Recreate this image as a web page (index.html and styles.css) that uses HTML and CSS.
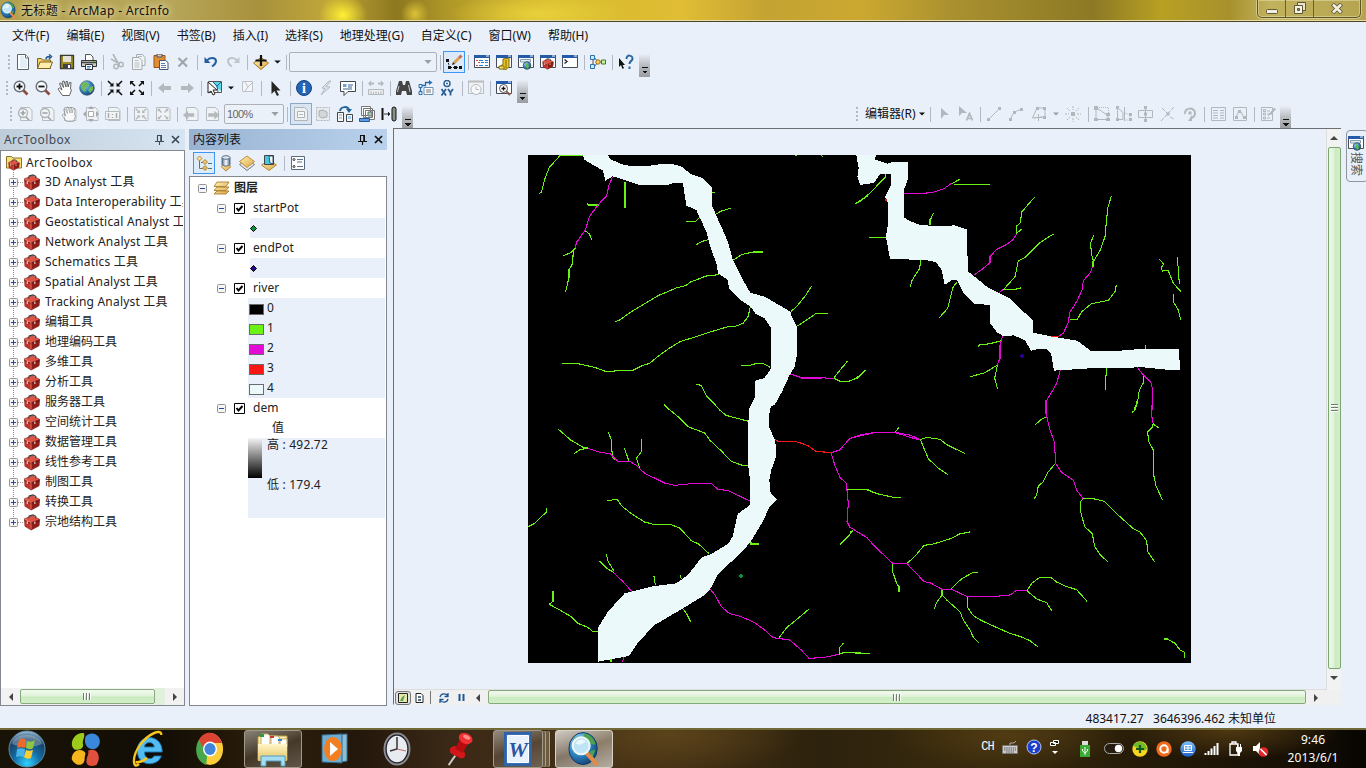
FILE: index.html
```html
<!DOCTYPE html>
<html lang="zh-CN">
<head>
<meta charset="utf-8">
<title>无标题 - ArcMap - ArcInfo</title>
<link rel="stylesheet" href="styles.css">
</head>
<body>
<svg class="defs" width="0" height="0">
<defs>
<linearGradient id="gGold" x1="0" y1="0" x2="1" y2="1"><stop offset="0" stop-color="#fff0b8"/><stop offset="1" stop-color="#dba642"/></linearGradient>
<linearGradient id="gCyl"><stop offset="0" stop-color="#49698f"/><stop offset=".5" stop-color="#fff"/><stop offset="1" stop-color="#46678c"/></linearGradient>
<radialGradient id="gOrb" cx=".5" cy=".9" r=".9"><stop offset="0" stop-color="#2fd3ff"/><stop offset=".4" stop-color="#146fa8"/><stop offset=".75" stop-color="#174267"/><stop offset="1" stop-color="#9fc3da"/></radialGradient>
<radialGradient id="gGlobe" cx=".35" cy=".3" r=".8"><stop offset="0" stop-color="#b9e4ff"/><stop offset=".5" stop-color="#2f86c4"/><stop offset="1" stop-color="#0e3767"/></radialGradient>
<linearGradient id="gBlue" x1="0" y1="0" x2="0" y2="1"><stop offset="0" stop-color="#7fc4ff"/><stop offset="1" stop-color="#1b5fc8"/></linearGradient>
<linearGradient id="gFold" x1="0" y1="0" x2="0" y2="1"><stop offset="0" stop-color="#fff6c9"/><stop offset="1" stop-color="#e3c25f"/></linearGradient>

<symbol id="new" viewBox="0 0 16 16"><path d="M2.500.5h8l3 3v12h-11z" fill="#fff" stroke="#5f6468"/><path d="M5 2v12h7V5H9V2z" fill="#e3edf8"/><path d="M10.500.5v3.500h3" fill="#fff" stroke="#5f6468"/></symbol>
<symbol id="open" viewBox="0 0 16 16"><path d="M.5 14.500v-10h4l1 1.500h8v8.500z" fill="#f3d167" stroke="#7b6320"/><path d="M.5 14.500L3 8h12.500l-2.500 6.500z" fill="#ffedab" stroke="#7b6320"/><path d="M9 5c0-2 2-2.500 4-2.500M12 .5l2.500 2-2.500 2.500" fill="none" stroke="#1b578f" stroke-width="1.500"/></symbol>
<symbol id="save" viewBox="0 0 16 16"><path d="M1.500 1.500h13v13h-13z" fill="#9b8a22" stroke="#3b3b32" stroke-width="1.300"/><path d="M4 2h8v6H4z" fill="#e5e3d8"/><path d="M4 10h8v5H4z" fill="#414141"/><path d="M9 11h2v3H9z" fill="#fff"/></symbol>
<symbol id="print" viewBox="0 0 16 16"><path d="M4.500 7V.5h5L12 3v4z" fill="#fff" stroke="#555"/><path d="M.5 6.500h15v6H.5z" fill="#c9c9c9" stroke="#333"/><path d="M1 8.500h14" stroke="#444" stroke-width="1.500"/><path d="M4.500 10.500h7v5h-7z" fill="#fff" stroke="#333"/><path d="M6 12.500h4M6 14h3" stroke="#287fd0"/><path d="M12 7.500h2" stroke="#67bd20"/></symbol>
<symbol id="cut" viewBox="0 0 16 16"><path d="M4 0l5 9M2 5l9 5" stroke="#b2b7bb" stroke-width="1.700" fill="none"/><circle cx="7" cy="12.500" r="2.200" fill="none" stroke="#b2b7bb" stroke-width="1.500"/><circle cx="12" cy="10.500" r="2.200" fill="none" stroke="#b2b7bb" stroke-width="1.500"/></symbol>
<symbol id="copy" viewBox="0 0 16 16"><path d="M5.500.5h6l2.500 3v8H5.500z" fill="#f2f5f8" stroke="#a5aaae"/><path d="M1.500 3.500H8l3 3v9H1.500z" fill="#f2f5f8" stroke="#a5aaae"/><path d="M3.500 6.500h4M3.500 9h5M3.500 11h5M3.500 13h5M7 2.500h4" stroke="#b7bcc0"/></symbol>
<symbol id="paste" viewBox="0 0 16 16"><path d="M1 1.500h11v12H1z" fill="#e18e34" stroke="#9b5314"/><path d="M4 0h5v3H4z" fill="#ccc" stroke="#555"/><path d="M6.500 6.500h6l2.500 2v7H6.500z" fill="#fff" stroke="#43566d"/><path d="M8 9.500h4M8 11.500h5M8 13.500h5" stroke="#5681b3"/></symbol>
<symbol id="del" viewBox="0 0 16 16"><path d="M3.500 4l8.500 8.500M12 4l-8.500 8.500" stroke="#a1a6aa" stroke-width="2.200"/></symbol>
<symbol id="undo" viewBox="0 0 16 16"><path d="M4 6.500c3-4 9-3 9 .5 0 3-2 4-4 5.500" fill="none" stroke="#245e9e" stroke-width="2"/><path d="M1.500 3v6h6z" fill="#245e9e"/></symbol>
<symbol id="redo" viewBox="0 0 16 16"><path d="M12 6.500C9 2.500 3 3.500 3 7c0 3 2 4 4 5.500" fill="none" stroke="#bfc5ca" stroke-width="2"/><path d="M14.500 3v6h-6z" fill="#bfc5ca"/></symbol>
<symbol id="add" viewBox="0 0 16 16"><path d="M8 3.500l7.500 5.500L8 15.500.5 9z" fill="url(#gGold)" stroke="#a97524"/><path d="M8 1v11M2.500 6.500h11" stroke="#111" stroke-width="2.200"/></symbol>
<symbol id="sketch" viewBox="0 0 16 16"><path d="M1.500 6l2 7M4 13.500h11" fill="none" stroke="#222" stroke-dasharray="2 1"/><path d="M0 5h3v3H0zM2 12h3v3H2zM8 12h3v3H8zM13 12h3v3h-3z" fill="#111"/><path d="M8 9l5-5" stroke="#dda44e" stroke-width="3"/><path d="M13 4l2.500-2.500" stroke="#c96e52" stroke-width="3"/><path d="M6 11l1-3 2 2z" fill="#222"/></symbol>
<symbol id="wnd" viewBox="0 0 16 16"><path d="M.5 1.500h15v12H.5z" fill="#fff" stroke="#454c58"/><path d="M0 1h16v3H0z" fill="#235ba8"/><path d="M12 2h3" stroke="#fff"/></symbol>
<symbol id="toc" viewBox="0 0 16 16"><use href="#wnd"/><path d="M2 6.500h2M4 8.500h2M2 11.500h2" stroke="#de493e"/><path d="M5 6.500h4M7 8.500h3M5 11.500h4M11 6.500h3M11 8.500h3M11 11.500h3" stroke="#267fd0"/></symbol>
<symbol id="cat" viewBox="0 0 16 16"><use href="#wnd"/><path d="M7 5l6-1v9l-3 2.500-5-1v-3l2-1z" fill="#e5c523" stroke="#836b11"/><path d="M10 6v8M3 12h5v3H3z" fill="#f4df65" stroke="#836b11"/></symbol>
<symbol id="search" viewBox="0 0 16 16"><use href="#wnd"/><path d="M2.500 5.500h10v2.500h-10z" fill="#e2edf7" stroke="#879cad"/><circle cx="9" cy="11.500" r="3.800" fill="url(#gGlobe)" stroke="#45606c"/><path d="M7 9l3 1 1 3-2 2-1-3z" fill="#61ba49"/></symbol>
<symbol id="tb" viewBox="0 0 18 18"><path d="M1 5l8-3 8 3.500-.5 7L8 17 1.500 13z" fill="#c23329" stroke="#7a1b16" stroke-width=".6"/><path d="M1 5l8-3 8 3.500L8 9z" fill="#dc5547"/><path d="M8 9l9-3.500-.5 7L8 17z" fill="#8e1e19"/><path d="M1 7l7 3.500L17 7" fill="none" stroke="#5c1410" stroke-width=".7"/><path d="M1.500 5.500L8 9v7" fill="none" stroke="#e98a78" stroke-width=".8"/><path d="M5.500 4.500L6 2l4-1 3 1.500v2" fill="none" stroke="#3a3a3a" stroke-width="1.200"/><path d="M4 7.500v3M12 8v2.500" stroke="#eadfd4" stroke-width="1.100"/></symbol>
<symbol id="tbw" viewBox="0 0 16 16"><use href="#wnd"/><use href="#tb" x="1" y="4" width="14" height="12"/></symbol>
<symbol id="py" viewBox="0 0 16 16"><use href="#wnd"/><path d="M2.500 5.500L5 7.500l-2.500 2" fill="none" stroke="#222" stroke-width="1.300"/></symbol>
<symbol id="model" viewBox="0 0 16 16"><path d="M3 3v10M4 3l4 5h5M4 13l4-5" fill="none" stroke="#555"/><path d="M.5 1.500h4v4h-4zM.5 10.500h4v4h-4z" fill="#c5ecff" stroke="#2c70b0"/><circle cx="8" cy="8" r="2.200" fill="#ffd15d" stroke="#9c7020"/><path d="M11.500 6h4v4h-4z" fill="#c6f0a5" stroke="#427a21"/></symbol>
<symbol id="help" viewBox="0 0 16 16"><path d="M1 4v9l2-2 1.500 4 1.500-1-1.500-3H7z" fill="#111"/><path d="M8.500 5c0-5 6.500-4 6 0-.3 2-3 2-3 5" fill="none" stroke="#2a69a3" stroke-width="2"/><path d="M10.500 12.500h2V15h-2z" fill="#2a69a3"/></symbol>

<symbol id="mag" viewBox="0 0 16 16"><path d="M9.500 9.500l5 5" stroke="#8e4b3b" stroke-width="2.600"/><circle cx="6.500" cy="6.500" r="5.300" fill="#f8fcff" stroke="#676d73" stroke-width="1.400"/></symbol>
<symbol id="zin" viewBox="0 0 16 16"><use href="#mag"/><path d="M3.500 6.500h6M6.500 3.500v6" stroke="#111" stroke-width="1.800"/></symbol>
<symbol id="zout" viewBox="0 0 16 16"><use href="#mag"/><path d="M3.500 6.500h6" stroke="#111" stroke-width="1.800"/></symbol>
<symbol id="hand" viewBox="0 0 16 16"><path d="M5.500 15.500L1 9l1.500-1L5 10 2.500 3.500 4 3l2.500 4.500-1-6L7 1l2 6V1.500h1.500L11 7l1.500-4.500H14L13.500 9l1 1-2 5.500z" fill="#fff" stroke="#555" stroke-width=".9"/></symbol>
<symbol id="globe" viewBox="0 0 16 16"><circle cx="8" cy="8" r="7.300" fill="url(#gGlobe)" stroke="#4a5f73" stroke-width=".7"/><path d="M3 3l4-1 3 2-1 3-3 1 1 3-2 1-3-4zM11 7l3-1v4l-3 3-2-3z" fill="#72b85a"/></symbol>
<symbol id="fixin" viewBox="0 0 16 16"><path d="M1 1l4 4M15 1l-4 4M1 15l4-4M15 15l-4-4" stroke="currentColor" stroke-width="1.600"/><path d="M6.500 2.500v4h-4zM9.500 2.500v4h4zM6.500 13.500v-4h-4zM9.500 13.500v-4h4z" fill="currentColor"/></symbol>
<symbol id="fixout" viewBox="0 0 16 16"><path d="M2 2l4 4M14 2l-4 4M2 14l4-4M14 14l-4-4" stroke="currentColor" stroke-width="1.600"/><path d="M1 5V1h4zM15 5V1h-4zM1 11v4h4zM15 11v4h-4z" fill="currentColor"/></symbol>
<symbol id="back" viewBox="0 0 16 16"><path d="M1 8l6-5v3h7v4H7v3z" fill="#b4b9bd"/></symbol>
<symbol id="fwd" viewBox="0 0 16 16"><path d="M15 8L9 3v3H2v4h7v3z" fill="#b4b9bd"/></symbol>
<symbol id="selfeat" viewBox="0 0 16 16"><path d="M1.500 1.500h13v11h-13z" fill="#f5f8fa" stroke="#555"/><path d="M6 2h8v9l-4-3z" fill="#59d5ef"/><path d="M6 2l4 4 4-4M10 6l1 6" fill="none" stroke="#23637a"/><path d="M1 2v11l3-2 2 4 2-1-2-4h4z" fill="#fff" stroke="#222"/></symbol>
<symbol id="clearsel" viewBox="0 0 16 16"><path d="M3.500 1.500h10v10h-10zM6 2l3 5-3 4M9 7l4-4" fill="#f3f5f8" stroke="#bdc2c7"/></symbol>
<symbol id="arrow" viewBox="0 0 16 16"><path d="M4 1v13l3-3 2.500 5 2-1-2.500-4.500h4z" fill="#252525"/></symbol>
<symbol id="info" viewBox="0 0 16 16"><circle cx="8" cy="8" r="7.500" fill="#2464b8" stroke="#17417e"/><text x="8" y="13" text-anchor="middle" font-family="Liberation Serif,serif" font-weight="bold" font-size="14" fill="#fff">i</text></symbol>
<symbol id="bolt" viewBox="0 0 16 16"><path d="M11 1L4 8l3 .5L3 15l9-8-4-.5L13 1z" fill="#dfe3e7" stroke="#b4b9be"/></symbol>
<symbol id="popup" viewBox="0 0 16 16"><path d="M.5 1.500h15v10H8l-4 4v-4H.5z" fill="#fff" stroke="#41474e"/><path d="M3 4h3.500v3H3z" fill="#6aa3d9"/><path d="M8 5h5M8 7h4M3 9h9" stroke="#3c638d"/></symbol>
<symbol id="measure" viewBox="0 0 16 16"><path d="M0 3.500l3-3v2h3v2H3v2zM16 3.500l-3-3v2h-3v2h3v2z" fill="#b3b8bc"/><path d="M.5 9.500h15v5H.5z" fill="#edf0f2" stroke="#b3b8bc"/><path d="M3 11v3M5.500 12v2M8 11v3M10.500 12v2M13 11v3" stroke="#b3b8bc"/></symbol>
<symbol id="bino" viewBox="0 0 16 16"><path d="M3 1h3l1 4h2l1-4h3l3 10v4h-5l-1-4H6l-1 4H0v-4z" fill="#454545"/><path d="M3 6l-1.500 6M12.500 5l1.500 7" stroke="#ccc"/></symbol>
<symbol id="route" viewBox="0 0 16 16"><path d="M2.500 13V5.500h5V2.500h4" fill="none" stroke="#286ba7" stroke-width="1.300"/><path d="M11 0l3.500 2.500L11 5z" fill="#286ba7"/><path d="M1 4.500h3v3H1zM1 11.500h3v3H1z" fill="#dff2ff" stroke="#286ba7"/><path d="M6 7.500h9v7H6z" fill="#fff" stroke="#6a91b5"/><path d="M8 10h5M8 12h5" stroke="#777"/></symbol>
<symbol id="xy" viewBox="0 0 16 16"><circle cx="7" cy="3.500" r="3" fill="#fff" stroke="#2a6095" stroke-width="1.500"/><circle cx="7" cy="3.500" r="1" fill="#2a6095"/><path d="M1.500 9l4.500 6.500M6 9l-4.500 6.500M8 9l2.500 3.500L13 9M10.500 12v3.500" fill="none" stroke="#2a6095" stroke-width="1.800"/></symbol>
<symbol id="time" viewBox="0 0 16 16"><path d="M.5 1.500h15v12H.5z" fill="#edf0f3" stroke="#bbc0c4"/><path d="M0 1.500h16" stroke="#bbb" stroke-width="2"/><circle cx="8" cy="9.500" r="5" fill="#f6f8f9" stroke="#b6bbbf"/><path d="M8 6.500v3h3" fill="none" stroke="#b6bbbf"/></symbol>
<symbol id="viewer" viewBox="0 0 16 16"><use href="#wnd"/><path d="M10 11l4 4" stroke="#99563e" stroke-width="2"/><circle cx="7.500" cy="8.500" r="4" fill="#fff" stroke="#555"/><path d="M5.500 8.500h4M7.500 6.500v4" stroke="#111" stroke-width="1.300"/></symbol>

<symbol id="pg" viewBox="0 0 16 16"><path d="M3.500 1.500h9l2.500 3v10H3.500z" fill="#f0f3f6" stroke="#b7bcc0"/></symbol>
<symbol id="pzin" viewBox="0 0 16 16"><use href="#pg"/><circle cx="6" cy="7" r="4.500" fill="#f1f3f5" stroke="#aeb3b7" stroke-width="1.300"/><path d="M3.500 7h5M6 4.500v5M9 11l3 3" stroke="#9da2a6" stroke-width="1.600"/></symbol>
<symbol id="pzout" viewBox="0 0 16 16"><use href="#pg"/><circle cx="6" cy="7" r="4.500" fill="#f1f3f5" stroke="#aeb3b7" stroke-width="1.300"/><path d="M3.500 7h5M9 11l3 3" stroke="#9da2a6" stroke-width="1.600"/></symbol>
<symbol id="phand" viewBox="0 0 16 16"><use href="#pg"/><g opacity=".45"><use href="#hand"/></g></symbol>
<symbol id="pfull" viewBox="0 0 16 16"><use href="#pg"/><path d="M8 0l3 3H5zM8 16l3-3H5zM0 8l3-3v6zM16 8l-3-3v6z" fill="#a5aaae"/><path d="M5.500 5.500h5v5h-5z" fill="#fff" stroke="#aaa"/></symbol>
<symbol id="p11" viewBox="0 0 16 16"><use href="#pg"/><path d="M.5 5.500h14v8H.5z" fill="#f2f4f6" stroke="#b7bcc0"/><path d="M3.500 7v5M11.500 7v5M7.500 8v1M7.500 11v1" stroke="#aaa" stroke-width="1.500"/></symbol>
<symbol id="pin1" viewBox="0 0 16 16"><path d="M1.500 1.500h12l1.500 2v11H1.500z" fill="#f0f3f6" stroke="#b7bcc0"/><use href="#fixin" x="2" y="2" width="12" height="12"/></symbol>
<symbol id="pout1" viewBox="0 0 16 16"><path d="M1.500 1.500h12l1.500 2v11H1.500z" fill="#f0f3f6" stroke="#b7bcc0"/><use href="#fixout" x="2" y="2" width="12" height="12"/></symbol>
<symbol id="pback" viewBox="0 0 16 16"><use href="#pg"/><use href="#back" y="2" x="-1" width="14" height="14"/></symbol>
<symbol id="pfwd" viewBox="0 0 16 16"><path d="M1.500 1.500h9l3 3v10h-12z" fill="#f0f3f6" stroke="#b7bcc0"/><use href="#fwd" y="2" x="1" width="15" height="14"/></symbol>
<symbol id="draft" viewBox="0 0 16 16"><path d="M1.500 1.500h10l3 3v10h-13z" fill="#edf0f3" stroke="#b0b5ba"/><path d="M4.500 5.500h7v6h-7zM6 8.500h4" fill="#f8f9fa" stroke="#adb2b7"/></symbol>
<symbol id="focus" viewBox="0 0 16 16"><path d="M1.500 1.500h13v13h-13z" fill="#e8ebee" stroke="#b3b8bd" stroke-dasharray="2 1"/><path d="M4 5l4-1 4 2v5l-5 1-3-2z" fill="#d3d7da" stroke="#a9aeb3"/></symbol>
<symbol id="layout" viewBox="0 0 16 16"><path d="M3 5c1-5 8-5 9-1" fill="none" stroke="#21649e" stroke-width="2"/><path d="M9 3h6l-3 4z" fill="#21649e"/><path d="M.5 6.500h6v9h-6zM9.500 8.500h6v7h-6z" fill="#f4f6f7" stroke="#444"/><path d="M2 9h3M2 12h3" stroke="#999"/><path d="M11 10h3v3h-3z" fill="#9cd1ed"/></symbol>
<symbol id="pages" viewBox="0 0 16 16"><path d="M2.500.5h9v9h-9zM4.500 2.500h9v9h-9zM6.500 4.500h9v9h-9z" fill="#fff" stroke="#777"/><path d="M9 6h4v4H9z" fill="#9dd494" stroke="#668"/><path d="M.5 12.500h10v3H.5z" fill="#5e9ce0" stroke="#235c9d"/></symbol>
<symbol id="swipe" viewBox="0 0 16 16"><path d="M1.500 2v12" stroke="#111" stroke-width="2"/><path d="M3 8h5M7 6l2 2-2 2" stroke="#333"/><rect x="11" y="1" width="4" height="14" rx="2" fill="#8b9087" stroke="#111"/></symbol>

<symbol id="g-arrow" viewBox="0 0 16 16"><path d="M5 2v11l3-4h5z"/></symbol>
<symbol id="g-arrowA" viewBox="0 0 16 16"><path d="M1 0v10l3-3h5z"/><path d="M8.500 14.500l3-7 3 7M10 12.500h3" fill="none" stroke="currentColor" stroke-width="1.700"/></symbol>
<symbol id="g-line" viewBox="0 0 16 16"><path d="M3 13L13 3" stroke="currentColor"/><path d="M1 12h3v3H1zM12 1h3v3h-3z"/></symbol>
<symbol id="g-arc" viewBox="0 0 16 16"><path d="M3 14c0-6 5-10 10-10" fill="none" stroke="currentColor"/><path d="M1 12h3v3H1zM5 5h3v3H5zM12 2h3v3h-3z"/></symbol>
<symbol id="g-trace" viewBox="0 0 16 16"><path d="M6 2h8v9H9M6 2L1.500 12H5" fill="none" stroke="currentColor"/><path d="M5 1h3v3H5zM12 1h3v3h-3zM12 10h3v3h-3zM7 8h1v3h3v1H8v3H7v-3H4v-1h3z"/></symbol>
<symbol id="g-point" viewBox="0 0 16 16"><path d="M8 0v4M8 12v4M0 8h4M12 8h4M2 2l3 3M14 2l-3 3M2 14l3-3M14 14l-3-3" stroke="currentColor" stroke-dasharray="2 1"/><path d="M6 6h4v4H6z"/></symbol>
<symbol id="g-edit" viewBox="0 0 16 16"><path d="M2 2v11.500h12V9.500L2 1.500" fill="none" stroke="currentColor"/><path d="M3 1.500h11.500V8" fill="none" stroke="currentColor" stroke-dasharray="1 1"/><path d="M0 0h4v4H0zM0 12h4v3H0zM12 12h4v3h-4zM12 7h4v3h-4z"/></symbol>
<symbol id="g-reshape" viewBox="0 0 16 16"><path d="M1.500 2v11.500H7V6.500L2 2M8.500 1v14" fill="none" stroke="currentColor"/><path d="M9 7l5 2v5H9" fill="none" stroke="currentColor" stroke-dasharray="1 1"/><path d="M0 0h3v3H0zM0 12h3v3H0zM13 7h3v3h-3zM13 12h3v3h-3z"/></symbol>
<symbol id="g-cut" viewBox="0 0 16 16"><path d="M.5 4.500h14v7H.5zM7.500 0v16" fill="none" stroke="currentColor"/><path d="M6 0h3v3H6zM6 6.500h3v3H6zM6 13h3v3H6z"/></symbol>
<symbol id="g-split" viewBox="0 0 16 16"><path d="M1 15L14 1M2 2l5 5M10 11l4 2" fill="none" stroke="currentColor" stroke-dasharray="4 1"/><path d="M6.500 6.500h3v3h-3z"/></symbol>
<symbol id="g-rot" viewBox="0 0 16 16"><path d="M3 8c-1-7 10-7 10-1 0 4-4 5-4 5" fill="none" stroke="currentColor" stroke-width="2"/><path d="M10 9v6H6zM6.500 5.500h3v3h-3z"/></symbol>
<symbol id="g-table" viewBox="0 0 16 16"><path d="M1.500 1.500h14v13h-14zM3 4.500h5M3 7h5M3 9.500h5M3 12h5M10 4.500h4M10 7h4M10 9.500h4M10 12h4" fill="none" stroke="currentColor"/></symbol>
<symbol id="g-sk" viewBox="0 0 16 16"><path d="M1.500 1.500h13v13h-13zM4 11l3-6 2 1 3 6" fill="none" stroke="currentColor"/><path d="M3 10h3v3H3zM6 4h3v3H6zM11 10h3v3h-3z"/></symbol>
<symbol id="g-create" viewBox="0 0 16 16"><path d="M1.500 1.500h11v13h-11zM3.500 3.500h2v2h-2zM3.500 7h2v2h-2zM3.500 11h2v2h-2zM7 5h3M7 8h3M7 12h3M8 10l7-8" fill="none" stroke="currentColor"/><path d="M9 8l5-6 2 1-5 6z"/></symbol>

<symbol id="listorder" viewBox="0 0 17 17"><path d="M3.500 5v8.500H7M5 7.500h2M12 8.500h4M12 13.500h4" fill="none" stroke="#577"/><path d="M3.500 1L6 3.500 3.500 6 1 3.500zM9 4.500l2.500 2.500L9 9.500 6.500 7zM9 10.500l2.500 2.500L9 15.500 6.500 13z" fill="url(#gGold)" stroke="#b68836"/></symbol>
<symbol id="cyl" viewBox="0 0 16 18"><path d="M8 9l5 3.500-5 4.500-5-4.500z" fill="url(#gGold)" stroke="#b68836"/><path d="M4 3.500v7c1 2 7 2 8 0v-7z" fill="url(#gCyl)" stroke="#5b6d85"/><ellipse cx="8" cy="3.500" rx="4" ry="1.800" fill="#dfe9f2" stroke="#5b6d85"/></symbol>
<symbol id="vis" viewBox="0 0 18 18"><path d="M1.500 10.500l7.500-5 7.500 5-7.500 6z" fill="#e5e7ea" stroke="#777"/><path d="M1.500 7.500L9 2l7.500 5.500-7.500 6z" fill="url(#gGold)" stroke="#c18f3a"/></symbol>
<symbol id="selc" viewBox="0 0 18 18"><path d="M1.500 11L9 6l7.500 5L9 16.500z" fill="url(#gGold)" stroke="#b68836"/><path d="M4.500 1.500h9v9h-9z" fill="#44c9df" stroke="#444"/><path d="M9 2h4v8l-3-1z" fill="#e8fbff" stroke="#235" stroke-width=".8"/></symbol>
<symbol id="opts" viewBox="0 0 14 16"><path d="M.5 1.500h13v13H.5z" fill="#fff" stroke="#5b6c7d"/><path d="M6 4.500h6M6 11.500h6M6 7h5" stroke="#587594"/><circle cx="3" cy="4.500" r="1" fill="none" stroke="#333"/><circle cx="3" cy="11.500" r="1" fill="none" stroke="#333"/></symbol>
<symbol id="pushpin" viewBox="0 0 9 10"><path d="M2 .5h5M2.500 1v5M6 1v5M0 6.500h9M4.500 7v3" stroke="currentColor" stroke-width="1.100"/><path d="M5.500.5h1.500V6H5.500z" fill="currentColor"/></symbol>
<symbol id="close" viewBox="0 0 9 9"><path d="M1 1l7 7M8 1L1 8" stroke="currentColor" stroke-width="1.700"/></symbol>
<symbol id="box" viewBox="0 0 9 9"><rect x=".5" y=".5" width="8" height="8" rx="1" fill="#f5f5f5" stroke="#929292"/></symbol>
<symbol id="plus" viewBox="0 0 9 9"><use href="#box"/><path d="M2 4.500h5M4.500 2v5" stroke="#2b4796"/></symbol>
<symbol id="minus" viewBox="0 0 9 9"><use href="#box"/><path d="M2 4.500h5" stroke="#2b4796"/></symbol>
<symbol id="chk" viewBox="0 0 11 11"><path d="M.5.5h10v10H.5z" fill="#fff" stroke="#000"/><path d="M2.500 5l2 2.500L8.500 3" fill="none" stroke="#000" stroke-width="1.900"/></symbol>
<symbol id="layers" viewBox="0 0 17 14"><path d="M1 13l3-3h12l-3 3zM1 9.500l3-3.500h12l-3 3.500zM1 5.500L4 1h12l-3 4.500z" fill="url(#gGold)" stroke="#a9802f" stroke-width=".9"/></symbol>
<symbol id="rootbox" viewBox="0 0 16 16"><path d="M.5 1.500h5L7 3h8.500v10H.5z" fill="#f7df7a" stroke="#8a7426"/><use href="#tb" x="2" y="4" width="12" height="12"/></symbol>
<symbol id="al" viewBox="0 0 6 8"><path d="M5 0v8L1 4z" fill="#444"/></symbol>
<symbol id="ar" viewBox="0 0 6 8"><path d="M1 0v8l4-4z" fill="#444"/></symbol>

<symbol id="arcglobe" viewBox="0 0 36 40"><ellipse cx="17" cy="19" rx="15" ry="17" fill="url(#gGlobe)" stroke="#0d3a63"/><path d="M18 3c8 1 12 7 12 12l-6-1-6-5zM6 9l6-3-4 8zM24 22l6-2-3 9z" fill="#4da24f"/><path d="M21 24l10 11" stroke="#e18a4a" stroke-width="4.500" stroke-linecap="round"/><circle cx="15" cy="16" r="9" fill="#bfe4f5" stroke="#eef6fa" stroke-width="2.200"/><path d="M9 14c2-5 8-6 11-2l-6 3z" fill="#fff" opacity=".7"/></symbol>
</defs>
</svg>

<div class="screen">
<header class="title">
  <svg class="appicon" width="17" height="19"><use href="#arcglobe"/></svg>
  <span class="titletext">无标题 - ArcMap - ArcInfo</span>
  <div class="winbtns">
    <span><svg width="12" height="5"><rect x=".5" y=".5" width="11" height="4" rx="1" fill="#f1efe0" stroke="#5e5938"/></svg></span>
    <span><svg width="12" height="12"><path d="M3.500.5h8v8h-8z" fill="#e9e5cd" stroke="#5e5938"/><path d="M.5 3.500h8v8h-8z" fill="#f5f2e2" stroke="#5e5938"/><path d="M3.500 6.500h2v2h-2z" fill="#888150" stroke="#5e5938"/></svg></span>
    <span class="wide"><svg width="12" height="11"><path d="M1.500 1l9 9M10.500 1l-9 9" stroke="#5e5938" stroke-width="4.200"/><path d="M2 1.500l8 8M10 1.500l-8 8" stroke="#f1efe0" stroke-width="2.500"/></svg></span>
  </div>
</header>
<nav class="menu"><span>文件(F)</span><span>编辑(E)</span><span>视图(V)</span><span>书签(B)</span><span>插入(I)</span><span>选择(S)</span><span>地理处理(G)</span><span>自定义(C)</span><span>窗口(W)</span><span>帮助(H)</span></nav>

<div class="bar r1"><i class="grip"></i>
<svg><use href="#new"/></svg><svg><use href="#open"/></svg><svg><use href="#save"/></svg><svg><use href="#print"/></svg><i class="sep"></i>
<svg><use href="#cut"/></svg><svg><use href="#copy"/></svg><svg><use href="#paste"/></svg><svg><use href="#del"/></svg><i class="sep"></i>
<svg><use href="#undo"/></svg><svg><use href="#redo"/></svg><i class="sep"></i>
<svg><use href="#add"/></svg><i class="caret"></i><i class="sep"></i>
<div class="combo big"><i class="caret gray"></i></div><i class="sep"></i>
<svg class="on"><use href="#sketch"/></svg><i class="sep"></i>
<svg><use href="#toc"/></svg><svg><use href="#cat"/></svg><svg><use href="#search"/></svg><svg><use href="#tbw"/></svg><svg><use href="#py"/></svg><i class="sep"></i>
<svg><use href="#model"/></svg><i class="sep"></i><svg><use href="#help"/></svg><i class="more"></i></div>

<div class="bar r2"><i class="grip"></i>
<svg><use href="#zin"/></svg><svg><use href="#zout"/></svg><svg><use href="#hand"/></svg><svg><use href="#globe"/></svg><i class="sep"></i>
<svg><use href="#fixin"/></svg><svg><use href="#fixout"/></svg><i class="sep"></i>
<svg><use href="#back"/></svg><svg><use href="#fwd"/></svg><i class="sep"></i>
<svg><use href="#selfeat"/></svg><i class="caret"></i><svg><use href="#clearsel"/></svg><i class="sep"></i>
<svg class="w23"><use href="#arrow"/></svg><i class="sep"></i>
<svg><use href="#info"/></svg><svg><use href="#bolt"/></svg><svg><use href="#popup"/></svg><i class="sep"></i>
<svg><use href="#measure"/></svg><i class="sep"></i>
<svg><use href="#bino"/></svg><svg><use href="#route"/></svg><svg><use href="#xy"/></svg><i class="sep"></i>
<svg><use href="#time"/></svg><i class="sep"></i><svg><use href="#viewer"/></svg><i class="more"></i></div>

<div class="bar r3"><i class="grip"></i>
<svg><use href="#pzin"/></svg><svg><use href="#pzout"/></svg><svg><use href="#phand"/></svg><svg><use href="#pfull"/></svg><svg><use href="#p11"/></svg><i class="sep"></i>
<svg class="dim"><use href="#pin1"/></svg><svg class="dim"><use href="#pout1"/></svg><i class="sep"></i>
<svg><use href="#pback"/></svg><svg><use href="#pfwd"/></svg>
<div class="combo small"><span>100%</span><i class="caret gray"></i></div><i class="sep"></i>
<svg class="on soft"><use href="#draft"/></svg><svg><use href="#focus"/></svg><svg><use href="#layout"/></svg><svg><use href="#pages"/></svg><svg><use href="#swipe"/></svg><i class="more"></i>
<div class="editor dim"><i class="grip"></i><span class="edname">编辑器(R)</span><i class="caret"></i><i class="sep"></i>
<svg><use href="#g-arrow"/></svg><svg><use href="#g-arrowA"/></svg><i class="sep"></i>
<svg><use href="#g-line"/></svg><svg><use href="#g-arc"/></svg><svg class="w24"><use href="#g-trace"/></svg><i class="caret gray"></i><svg class="w24"><use href="#g-point"/></svg><i class="sep"></i>
<svg><use href="#g-edit"/></svg><svg><use href="#g-reshape"/></svg><svg><use href="#g-cut"/></svg><svg><use href="#g-split"/></svg><svg><use href="#g-rot"/></svg><i class="sep"></i>
<svg><use href="#g-table"/></svg><svg><use href="#g-sk"/></svg><i class="sep"></i><svg><use href="#g-create"/></svg><i class="more"></i></div></div>

<main class="work">
<section class="panel toolbox">
  <div class="phead idle"><span>ArcToolbox</span><svg width="9" height="10"><use href="#pushpin"/></svg><svg width="9" height="9"><use href="#close"/></svg></div>
  <div class="tree">
    <div class="root"><svg width="16" height="16"><use href="#rootbox"/></svg><span>ArcToolbox</span></div>
    <ul>
    <li><svg width="9" height="9"><use href="#plus"/></svg><svg width="18" height="17"><use href="#tb"/></svg><span>3D Analyst 工具</span></li>
    <li><svg width="9" height="9"><use href="#plus"/></svg><svg width="18" height="17"><use href="#tb"/></svg><span>Data Interoperability 工具</span></li>
    <li><svg width="9" height="9"><use href="#plus"/></svg><svg width="18" height="17"><use href="#tb"/></svg><span>Geostatistical Analyst 工具</span></li>
    <li><svg width="9" height="9"><use href="#plus"/></svg><svg width="18" height="17"><use href="#tb"/></svg><span>Network Analyst 工具</span></li>
    <li><svg width="9" height="9"><use href="#plus"/></svg><svg width="18" height="17"><use href="#tb"/></svg><span>Schematics 工具</span></li>
    <li><svg width="9" height="9"><use href="#plus"/></svg><svg width="18" height="17"><use href="#tb"/></svg><span>Spatial Analyst 工具</span></li>
    <li><svg width="9" height="9"><use href="#plus"/></svg><svg width="18" height="17"><use href="#tb"/></svg><span>Tracking Analyst 工具</span></li>
    <li class="zh"><svg width="9" height="9"><use href="#plus"/></svg><svg width="18" height="17"><use href="#tb"/></svg><span>编辑工具</span></li>
    <li class="zh"><svg width="9" height="9"><use href="#plus"/></svg><svg width="18" height="17"><use href="#tb"/></svg><span>地理编码工具</span></li>
    <li class="zh"><svg width="9" height="9"><use href="#plus"/></svg><svg width="18" height="17"><use href="#tb"/></svg><span>多维工具</span></li>
    <li class="zh"><svg width="9" height="9"><use href="#plus"/></svg><svg width="18" height="17"><use href="#tb"/></svg><span>分析工具</span></li>
    <li class="zh"><svg width="9" height="9"><use href="#plus"/></svg><svg width="18" height="17"><use href="#tb"/></svg><span>服务器工具</span></li>
    <li class="zh"><svg width="9" height="9"><use href="#plus"/></svg><svg width="18" height="17"><use href="#tb"/></svg><span>空间统计工具</span></li>
    <li class="zh"><svg width="9" height="9"><use href="#plus"/></svg><svg width="18" height="17"><use href="#tb"/></svg><span>数据管理工具</span></li>
    <li class="zh"><svg width="9" height="9"><use href="#plus"/></svg><svg width="18" height="17"><use href="#tb"/></svg><span>线性参考工具</span></li>
    <li class="zh"><svg width="9" height="9"><use href="#plus"/></svg><svg width="18" height="17"><use href="#tb"/></svg><span>制图工具</span></li>
    <li class="zh"><svg width="9" height="9"><use href="#plus"/></svg><svg width="18" height="17"><use href="#tb"/></svg><span>转换工具</span></li>
    <li class="zh"><svg width="9" height="9"><use href="#plus"/></svg><svg width="18" height="17"><use href="#tb"/></svg><span>宗地结构工具</span></li>
    </ul>
    <div class="hscroll"><b><svg width="6" height="8"><use href="#al"/></svg></b><i class="thumb t1"><em></em></i><i class="track"></i><b><svg width="6" height="8"><use href="#ar"/></svg></b></div>
  </div>
</section>

<section class="panel toc">
  <div class="phead"><span>内容列表</span><svg width="9" height="10"><use href="#pushpin"/></svg><svg width="9" height="9"><use href="#close"/></svg></div>
  <div class="toctools"><span class="sel"><svg width="17" height="17"><use href="#listorder"/></svg></span><svg class="first" width="16" height="18"><use href="#cyl"/></svg><svg width="18" height="18"><use href="#vis"/></svg><svg width="18" height="18"><use href="#selc"/></svg><i class="sep"></i><svg width="14" height="16"><use href="#opts"/></svg></div>
  <div class="layers">
    <div class="row l0"><svg width="9" height="9"><use href="#minus"/></svg><svg width="17" height="14"><use href="#layers"/></svg><strong>图层</strong></div>
    <div class="row l1"><svg width="9" height="9"><use href="#minus"/></svg><svg width="11" height="11"><use href="#chk"/></svg><span>startPot</span></div>
    <div class="row sym pt"><svg width="7" height="7"><path d="M3.500.5l3 3-3 3-3-3z" fill="#009639" stroke="#000"/></svg></div>
    <div class="row l1"><svg width="9" height="9"><use href="#minus"/></svg><svg width="11" height="11"><use href="#chk"/></svg><span>endPot</span></div>
    <div class="row sym pt"><svg width="7" height="7"><path d="M3.500.5l3 3-3 3-3-3z" fill="#2a0096" stroke="#000"/></svg></div>
    <div class="row l1"><svg width="9" height="9"><use href="#minus"/></svg><svg width="11" height="11"><use href="#chk"/></svg><span>river</span></div>
    <div class="row sym"><i class="sw c0"></i><span>0</span></div>
    <div class="row sym"><i class="sw c1"></i><span>1</span></div>
    <div class="row sym"><i class="sw c2"></i><span>2</span></div>
    <div class="row sym"><i class="sw c3"></i><span>3</span></div>
    <div class="row sym"><i class="sw c4"></i><span>4</span></div>
    <div class="row l1"><svg width="9" height="9"><use href="#minus"/></svg><svg width="11" height="11"><use href="#chk"/></svg><span>dem</span></div>
    <div class="row val">值</div>
    <div class="ramp"><i></i><div><span>高 : 492.72</span><span>低 : 179.4</span></div></div>
  </div>
</section>

<section class="view">
  <div class="canvas">
  <svg class="map" width="663" height="508" viewBox="0 0 663 508" shape-rendering="crispEdges">
    <rect width="663" height="508" fill="#000"/>
    <g fill="none" stroke="#6bf215" stroke-width="3.200">
      <g transform="translate(0 -5) scale(.33333)">
        <path d="M220 17H96L64 52 50 88 41 125 32 133M291 95V173M212 164H180L177 160M173 243L184 252 191 269M143 294L128 308 106 317M136 298L134 340 123 360V382L113 425M551 128H561M561 194L580 183 608 175M515 202L503 214H475M540 269L520 275 505 284M617 330L640 314 675 306H705M572 374L535 378 485 397 475 406 445 414 390 437 350 461 310 485 275 510 262 515M667 470L660 500 645 520 622 529 600 530 550 545 505 560 458 574 425 594 390 619 365 640 342 647 315 661 232 664 200 652 155 642 103 641M789 485L810 465 833 436 851 408M806 529L830 514 863 491H900M727 652L708 642 687 640 665 646H639M918 683L937 659 958 634M918 685L935 693 960 695 985 685 1012 660M504 703L519 706 537 740 556 758 575 780 594 796 662 814M408 763L422 777 450 800 480 830 530 849 545 870 580 903 610 934 640 945 660 947M804 15V18M880 15L884 20M1020 133L995 155 982 161"/>
        <path d="M180 165H212M123 357V382M675 306H705" stroke-width="6"/>
      </g>
      <g transform="translate(0 245) scale(.33333)">
        <path d="M90 87L128 120 165 142H179M179 144L155 150 139 160M241 97L250 120 253 170 261 178M289 145L303 183M340 117V155L325 175 335 204M0 380L20 370 55 336V323M237 302L268 298 280 317 310 341 350 366 380 374H430L455 384 490 422 512 432 543 461M235 462L240 483 257 512M214 483L238 506 257 517M75 573V604L64 613 90 627 130 650 150 670 180 682 193 694H210M378 529L382 556M457 525V531L463 538M669 426V432H692M466 627L475 640 488 665M753 714L775 684 810 655 842 628M934 764V743L946 730M932 761L950 758 1020 760M958 268H1010L1030 271M975 392L960 410 937 433M249 778V785"/>
        <path d="M75 573V604" stroke-width="6"/>
      </g>
      <g transform="translate(322 -5) scale(.33333)">
        <path d="M107 73V80L85 103 50 140 15 161M305 101L329 88M312 103H420M250 190L240 212V225M57 262H110M212 331L209 355 185 393 181 410M322 395L309 412 293 475 268 503M554 142L539 158 516 185 510 220 500 228V250L515 237M611 252L597 260 570 278 525 323 505 332 495 380 463 416M460 418H495L512 414M784 138L773 175 765 260 750 302 730 335V350M731 256L722 278 724 310 730 332M660 508H682L695 485 725 461 775 451 795 425 799 405M928 328L941 342 934 352 937 363 955 362 970 400 993 425M982 321L988 401M970 432V455L985 480 992 510M886 585V600M769 655L766 720M881 675L879 700 868 720 862 760 855 780M452 573L415 582 388 583 386 590M441 646L405 668 361 680M442 646L434 685 443 717M47 660L22 685 0 692"/>
        <path d="M729 332V350M240 206V223M855 770V780" stroke-width="6"/>
      </g>
      <g transform="translate(322 245) scale(.33333)">
        <path d="M133 98L147 83M211 119L230 112 270 118 290 134 344 160M212 121L235 176 265 205 293 223M0 268H45L85 282 130 292H153M588 51L573 59 555 75M862 0L855 30 846 38M908 70L920 80 926 83M908 72V80L893 96 896 125 910 150 911 225 918 257 937 299M614 192L593 218 580 245 565 258 560 285 553 296M699 295L692 305V335L704 380 727 401 734 440 750 464 773 485M699 295H725L763 304 800 341 850 386 870 396 890 422 893 455 914 486M171 491L200 463 222 436 250 432 305 415 328 402 359 396M128 490V515L140 550 147 562M303 567L335 536 370 517H383M276 570V585L260 607 253 627M277 585L290 600 330 635 340 660 360 690 370 712 386 728M352 590V622L370 647 395 662 450 687 480 700 515 711 540 722 563 740M531 571L545 550 570 532H602L620 546 645 558 680 569 712 605M532 573L560 597 590 608 605 632M943 717H952L975 730 990 750 1003 757V773M0 757L60 761M0 397L10 392"/>
        <path d="M147 558V575M276 569V586" stroke-width="6"/>
      </g>
    </g>
    <g fill="none" stroke="#e30ad8" stroke-width="3.200">
      <path transform="translate(0 -5) scale(.33333)" d="M254 80L243 105 236 137 210 165 184 200 172 240 145 278 142 294M787 672L820 683H880L918 686"/>
      <path transform="translate(0 -5) scale(.33333)" d="M820 684H882" stroke-width="6"/>
      <path transform="translate(0 245) scale(.33333)" d="M179 145L215 157 246 161 270 184H305L325 196 350 220 410 249 440 256 500 250H550L568 267 600 272 668 304M257 518L285 545 314 577M545 565L560 584 580 620 605 641 640 650 680 668 710 690 735 713 785 720 820 750 843 775 890 772 932 763M287 770L284 785M910 158L935 150 965 116 1000 104 1040 97 1100 97 1145 105 1176 118M910 160L920 195 936 232 955 250 961 310 957 365 966 382 1020 415"/>
      <path transform="translate(322 -5) scale(.33333)" d="M162 130H220L250 127 280 117 305 100M500 252L488 270 465 286 440 298 420 320V338L400 355 371 376M460 418L447 428M727 350L722 367 700 392 696 420 680 455 658 490 656 515 640 550 625 559M458 557L450 585V625L441 646M631 660L620 700 606 725 588 755V780M862 652L880 675 903 698 908 720V780"/>
      <path transform="translate(322 245) scale(.33333)" d="M0 115L55 102 75 97H133L180 112 211 120M0 382L50 412 75 440 128 490H170L200 521 222 545 240 548 276 568H305L352 590H430L480 585 500 571H531M588 0V40L600 90 613 125 617 190 635 217 670 241 680 270 699 295M908 0L904 35 908 70"/>
    </g>
    <g fill="#ecf9fa">
      <path transform="translate(0 -5) scale(.33333)" d="M165 15H239L246 27 279 42 303 47H365L400 42H430L458 48 490 73 525 85 551 111V165L565 197 590 253 601 280 614 328 642 385 667 428 712 441 787 485 791 500 808 533V610L800 650 785 675 762 725 740 765 728 770 723 800V830L740 868 744 890V920L730 960 724 990 728 1030 746 1049 725 1069 707 1110 670 1172 647 1200 570 1273 545 1320 530 1335 465 1375 380 1425 330 1477 303 1518 210 1535V1433L240 1385 290 1330 375 1309 445 1300 480 1275 520 1223 550 1212 600 1182 614 1160 629 1092 666 1065V990L660 940V830L664 775 677 750 681 740V692L708 685 730 655V535L710 505 682 491 668 470 637 450 603 416 600 390 570 370 565 340 545 285 535 245 505 180 475 167 465 100 443 98 420 104H332L290 90 254 79 232 92 225 62 170 30z"/>
      <path transform="translate(322 -5) scale(.33333)" d="M19 15H77L76 29 113 41 127 36H173V88L162 120V203L180 213 208 224 260 229 315 226 350 238 354 364 412 411 448 429 480 446 548 511V548L604 559 682 572 722 602H810L870 597H987L990 659H950L870 651 820 655H718L612 662 603 610 590 597H565L543 602 524 570 490 556 460 559 440 546 421 520 419 465 372 461 344 434 321 391 307 390 284 404 275 360 258 337 233 331 120 326 108 260 114 222V160L105 140 123 106V72H90L72 99 30 105 22 80 26 55z"/>
    </g>
    <g fill="none" stroke="#fb1616" stroke-width="3.200"><path transform="translate(0 245) scale(.33333)" d="M741 118L750 124H800L815 128 840 137 865 155 910 157"/><path transform="translate(322 -5) scale(.33333)" d="M108 147V153M604 559H626" stroke-width="4"/></g>
    <path d="M212 419h2v1h1v2h-1v1h-2v-1h-1v-2h1z" fill="#009639"/>
    <path d="M493 199h2v1h1v2h-1v1h-2v-1h-1v-2h1z" fill="#2a0096"/>
  </svg>
  </div>
  <div class="vscroll"><b><svg width="8" height="6"><path d="M0 5h8L4 1z" fill="#444"/></svg></b><i class="vthumb"><em></em></i><b><svg width="8" height="6"><path d="M0 1h8L4 5z" fill="#444"/></svg></b></div>
  <div class="viewfoot">
    <span class="vb on"><svg width="10" height="10"><path d="M.5.5h9v9h-9z" fill="#e7e9a9" stroke="#222"/><path d="M2 8l2-4 3-2-2 6z" fill="#5ba05c"/></svg></span>
    <span class="vb"><svg width="9" height="10"><path d="M1 .5h5l2 2v7H1z" fill="#fff" stroke="#222"/><path d="M3 4h3M3 7h3" stroke="#246" stroke-width="1.500"/></svg></span>
    <i class="sep"></i>
    <svg class="rf" width="10" height="10"><path d="M1 4c1-4 6-4 8-1M9 0v3.500H5.500M9 6c-1 4-6 4-8 1M1 10V6.500h3.500" fill="none" stroke="#1d5797" stroke-width="1.300"/></svg>
    <svg class="ps" width="7" height="7"><path d="M1.500 0v7M5.500 0v7" stroke="#1d5797" stroke-width="2"/></svg>
    <b><svg width="6" height="8"><use href="#al"/></svg></b><i class="thumb t2"><em></em></i><b><svg width="6" height="8"><use href="#ar"/></svg></b>
  </div>
</section>
<aside class="side"><div class="tab"><svg width="16" height="16"><use href="#search"/></svg><span>搜索</span></div></aside>
</main>

<footer class="status"><span>483417.27&nbsp;&nbsp;&nbsp;3646396.462 未知单位</span></footer>

<div class="taskbar">
  <span class="start"><svg width="40" height="38" viewBox="0 0 40 38"><circle cx="20" cy="19" r="18" fill="url(#gOrb)" stroke="#5e8ba8"/><path d="M5 14C8 2 32 2 35 14 27 18 13 18 5 14z" fill="#fff" opacity=".28"/><path d="M12 10c3-2 5-1 7 0l-1 8c-3-1-5-1-8 0z" fill="#ee6a2b"/><path d="M20 11c3 1 5 1 8-1l-2 8c-2 2-5 1-7 0z" fill="#8ec63e"/><path d="M10 19c3-1 5-1 8 0l-1 8c-3-1-5-1-8 0z" fill="#47b4e9"/><path d="M19 20c2 1 5 1 7 0l-2 8c-2 1-5 1-7-1z" fill="#fccd34"/></svg></span>
  <span class="tk"><svg width="31" height="37" viewBox="0 0 34 38"><path d="M15 1C4 0-2 14 5 19c5 1 11-1 9-7 0-5 3-7 1-11z" fill="#9dcb1c"/><path d="M17 5c6-8 19-2 15 9-3 6-11 6-14 1-2-3-2-7-1-10z" fill="#3988dc"/><path d="M17 23c-4-7-16-3-15 7 5 9 15 7 14-2z" fill="#f4b61c"/><path d="M20 20c10-4 15 7 9 16-6 2-11 1-11-4 0-5 3-7 2-12z" fill="#e0503c"/></svg></span>
  <span class="tk"><svg width="32" height="38" viewBox="0 0 36 38" preserveAspectRatio="none"><path d="M28 22H14c0 8 9 8 11 4h8c-4 11-27 11-27-5C6 3 34 3 34 22zM14 17h11c0-6-11-6-11 0z" fill="#52bdf2" stroke="#1d78b8"/><path d="M8 34C0 40 0 26 9 15 18 4 33-2 33 5M4 32c6 1 10-2 13-4" fill="none" stroke="#f6c51f" stroke-width="2.500"/></svg></span>
  <span class="tk"><svg width="28" height="34" viewBox="0 0 30 34" preserveAspectRatio="none"><ellipse cx="15" cy="17" rx="14" ry="16" fill="#fdce3a"/><path d="M3 8C10-3 23-1 28 11H15L9 20z" fill="#dd4332"/><path d="M3 8l9 14-1 11C-1 29-2 16 3 8z" fill="#47a84b"/><circle cx="15" cy="17" r="7.500" fill="#fff"/><circle cx="15" cy="17" r="6" fill="#4385db"/></svg></span>
  <span class="tk act"><svg width="34" height="36" viewBox="0 0 34 36"><path d="M2 6l8-3 4 2h17v24H2z" fill="url(#gFold)" stroke="#bd9a3f"/><path d="M5 3h7l3 3v8H5zM14 5h8l2 3v7H14zM23 8h8v8h-8z" fill="#fff" stroke="#c6ac59"/><path d="M4 3h4v3H4z" fill="#2e9e3b"/><path d="M14 5h4v2h-4z" fill="#c33"/><path d="M22 8h4v2h-4z" fill="#38c"/><path d="M2 13h29v17H2z" fill="url(#gFold)"/><path d="M5 35V25h24v10h-4v-5H10v5z" fill="#a6dcf0" stroke="#559cbd"/></svg></span>
  <span class="tk"><svg width="28" height="32" viewBox="0 0 28 32"><path d="M6 2l20-1v27l-6 1z" fill="#8cbdd6" stroke="#3c7290"/><path d="M1 2l20-1v29L1 29z" fill="#70add0" stroke="#2d6687"/><ellipse cx="12" cy="16" rx="9" ry="12" fill="#f47f20"/><path d="M9 9l8 7-8 7z" fill="#fff"/></svg></span>
  <span class="tk"><svg width="30" height="36" viewBox="0 0 30 36"><ellipse cx="15" cy="18" rx="12.500" ry="15.500" fill="#e8ebf0" stroke="#8d8d93" stroke-width="2"/><ellipse cx="15" cy="18" rx="11" ry="14" fill="none" stroke="#25252c" stroke-width="1.500"/><path d="M15 6v12l-7 2" fill="none" stroke="#333" stroke-width="1.500"/><path d="M15 18l9 2" stroke="#c66"/></svg></span>
  <span class="tk"><svg width="28" height="36" viewBox="0 0 28 38"><path d="M9 26L2 36" stroke="#ccc" stroke-width="2"/><path d="M11 16c-7-1-10 4-6 8l10 5c5 0 6-5 2-9z" fill="#d31619"/><path d="M14 8l9 5-6 10-8-4z" fill="#b50c0f"/><ellipse cx="20" cy="8" rx="7.500" ry="5.500" transform="rotate(25 20 8)" fill="#ef3033"/><ellipse cx="21" cy="6.500" rx="4" ry="2" transform="rotate(25 21 6.500)" fill="#ff8c88"/></svg></span>
  <span class="tk act word"><svg width="28" height="34" viewBox="0 0 28 34"><path d="M1 1h26v32H1z" fill="#3a6fb5" stroke="#2f63a8" stroke-width="2"/><path d="M3.500 3.500h21v27h-21z" fill="#e9f1fb" stroke="#fff"/><text x="14" y="25" text-anchor="middle" font-family="Liberation Serif,serif" font-style="italic" font-weight="bold" font-size="22" fill="#2a55a3">W</text></svg></span>
  <span class="tk act hot"><svg width="34" height="39"><use href="#arcglobe"/></svg></span>
  <div class="tray">
    <span class="ch">CH</span>
    <svg width="16" height="14"><path d="M.5 5.500h15v8H.5z" fill="#cfcfcf" stroke="#777"/><path d="M2 8h12M2 10h12M4 12h8" stroke="#555" stroke-dasharray="1.500 .7"/><path d="M8 5V3h4l2-2" fill="none" stroke="#aaa"/></svg>
    <svg width="16" height="16"><circle cx="8" cy="8" r="7" fill="#1b3ecb" stroke="#b5c8f0"/><text x="8" y="12.500" text-anchor="middle" font-family="Liberation Sans,sans-serif" font-weight="bold" font-size="12" fill="#fff">?</text></svg>
    <svg width="10" height="16"><path d="M3.500 1.500h5v3h-5zM.5 3.500h5v3h-5z" fill="#221a08" stroke="#fff"/><path d="M2 12h6l-3 3z" fill="#fff"/></svg>
    <svg class="usb" width="10" height="16"><path d="M2 0h6v4H2z" fill="#ddd"/><path d="M0 4h10v12H0z" fill="#3aab32"/><path d="M5 6v8M2.500 8v2L5 12l2.500-2V8" fill="none" stroke="#fff"/></svg>
    <svg class="pill" width="20" height="12"><rect x=".5" y=".5" width="19" height="10" rx="5" fill="#241d10" stroke="#aaa"/><circle cx="14.500" cy="5.500" r="3.700" fill="#fff"/></svg>
    <svg width="16" height="16"><circle cx="8" cy="8" r="7.700" fill="#f6d41f"/><path d="M1 5c3-7 13-5 14 3-4 4-9-2-14-3z" fill="#6fbb2b"/><path d="M8 4v8M4 8h8" stroke="#14591c" stroke-width="2.200"/></svg>
    <svg width="16" height="16"><circle cx="8" cy="8" r="7.700" fill="#f16a1c"/><circle cx="8" cy="8" r="3.700" fill="none" stroke="#fff" stroke-width="2"/><path d="M11.500 8v4" stroke="#fff" stroke-width="2"/></svg>
    <svg width="16" height="16"><circle cx="8" cy="8" r="7.700" fill="url(#gBlue)"/><path d="M4.500 4.500h7v5h-7zM3 11.500h10M8 4v5M4 7h8" fill="none" stroke="#fff"/></svg>
    <svg width="16" height="14"><path d="M1.500 11v2M4.500 9v4M7.500 6.500v6.500M10.500 4v9M13.500 1v12" stroke="#fff" stroke-width="2"/></svg>
    <svg width="16" height="16"><path d="M2 3h8v11H2zM4 1h4v2H4z" fill="none" stroke="#fff" stroke-width="1.300"/><path d="M8 6h6v4l-2 2v3h-2v-3L8 10z" fill="#fff"/><path d="M9.500 3v3M12.500 3v3" stroke="#fff"/></svg>
    <svg width="17" height="16"><path d="M1 5h3l4-4v13l-4-4H1z" fill="#fff"/><circle cx="11.500" cy="11" r="4.800" fill="#e32626"/><path d="M8.500 8l6 6" stroke="#fff" stroke-width="1.700"/></svg>
    <div class="clock"><span>9:46</span><span>2013/6/1</span></div>
  </div>
</div>
</div>
</body>
</html>
```
FILE: styles.css
```css
* { box-sizing: border-box; }
body { margin: 0; font: 12px/20px "Noto Sans", "Noto Sans CJK SC", sans-serif; color: #222; }
.defs { position: absolute; }
svg { display: block; flex: none; }
i, em { font-style: normal; }
.screen { width: 1366px; height: 768px; overflow: hidden; display: flex; flex-direction: column; background: #e9f0fa; }

.title { height: 22px; flex: none; display: flex; align-items: flex-start; border-bottom: 1px solid #4c4526; box-shadow: inset 0 -1px #e7dda5;
  background: radial-gradient(ellipse 24px 20px at 343px 15px, #fff032, transparent), radial-gradient(ellipse 14px 14px at 415px 14px, #dcc238, transparent), radial-gradient(ellipse 90px 22px at 540px 14px, #e8d03a, transparent),
  linear-gradient(90deg, #b1a04e 0, #b8a75b 12%, #a8913d 19%, #c1a638 24%, #8d7820 29%, #b19928 33%, #d6b92d 40%, #e0bd34 50%, #c5a333 56%, #cba830 63%, #a9902f 70%, #8c7925 80%, #b8a022 85%, #a8912d 90%, #c1b25e 93%, #b5a34f 100%); }
.appicon { margin: 1px 4px 0 0; }
.titletext { font-size: 12px; line-height: 21px; color: #111; text-shadow: 0 0 6px #efe6b8, 0 0 8px #efe6b8; flex: 1; letter-spacing: .37px; }
.winbtns { display: flex; height: 18px; margin-right: 5px; border: 1px solid #5f5524; border-top: 0; border-radius: 0 0 5px 5px; box-shadow: 0 0 0 1px rgba(255,255,220,.4), inset 0 0 0 1px rgba(255,255,220,.35); }
.winbtns span { width: 28px; display: flex; align-items: center; justify-content: center; border-right: 1px solid #6c6130; }
.winbtns span svg { margin-top: -1px; }
.winbtns span:first-child svg { margin-top: 5px; }
.winbtns .wide { width: 46px; border: 0; }

.menu { height: 27px; flex: none; display: flex; padding-left: 12px; gap: 17px; line-height: 28px; color: #111; }

.bar { height: 26px; flex: none; display: flex; align-items: center; color: #111; }
.bar svg { width: 22px; height: 16px; }
.r1 { padding-left: 8px; } .r2 { padding-left: 6px; } .r3 { padding-left: 10px; }
.grip { width: 4px; height: 15px; flex: none; background: repeating-linear-gradient(#b3b7be 0 2px, transparent 2px 4px) 0 0/2px 100% no-repeat; }
.sep { width: 6px; height: 15px; flex: none; background: linear-gradient(#b3b9c2, #b3b9c2) 3px 0/1px 100% no-repeat; }
.caret { width: 10px; height: 4px; flex: none; background: #111; clip-path: polygon(20% 10%, 80% 10%, 50% 90%); }
.caret.gray { background: #9a9fa4; }
.r1 > .caret { width: 11px; }
.bar .on { height: 22px; padding: 2px 0; background: #dbe9f8; border: 1px solid #3c96f2; }
.bar .soft { border-color: #8da7c6; background: #d9e4f2; }
.bar .w23 { width: 23px; }
.combo { height: 20px; flex: none; display: flex; align-items: center; justify-content: space-between; border: 1px solid #aeb2b8; border-radius: 2px; background: #ebf1f9; color: #666; padding: 0 4px 0 2px; font-size: 11px; }
.big { width: 148px; justify-content: flex-end; padding-right: 2px; }
.small { width: 60px; padding-right: 2px; font-family: "Liberation Sans", sans-serif; letter-spacing: -.6px; }
.combo .caret { width: 12px; height: 5px; }
.more { width: 11px; height: 23px; flex: none; align-self: flex-end; margin: 0 0 -2px 2px; background: linear-gradient(#111,#111) 3px 13px/6px 1px no-repeat, conic-gradient(from -45deg at 50% 100%, #111 90deg, transparent 0) 3px 17px/6px 3px no-repeat, linear-gradient(#e9eff8, #b8bbc0 50%, #999da2); }
.r3 .more { margin-left: 2px; }
.dim { color: #b2b7bb; fill: #b2b7bb; }
.editor { display: flex; align-items: center; height: 26px; margin-left: 443px; }
.editor > .grip { width: 9px; }
.edname { width: 52px; color: #111; white-space: nowrap; }
.editor > .sep { width: 6px; }
.bar .w24 { width: 24px; }
.editor .more { margin-left: 1px; }

.work { height: 578px; flex: none; display: flex; padding-top: 1px; }
.panel { display: flex; flex-direction: column; padding-top: 1px; height: 578px; }
.toolbox { width: 185px; margin-right: 4px; }
.toc { width: 198px; margin-right: 6px; }
.phead { height: 21px; flex: none; display: flex; align-items: center; gap: 7px; padding: 0 3px 0 4px; background: linear-gradient(90deg, #98b3d2, #b9d1ec); color: #111; }
.toc .phead { padding-right: 4px; }
.toolbox .phead { padding-right: 5px; }
.phead span { flex: 1; }
.idle { background: linear-gradient(90deg, #bfcddb, #d7e4f2); color: #3d4a57; }
.idle span, .root span { letter-spacing: .45px; }
.tree { flex: 1; min-height: 0; display: flex; flex-direction: column; background: #fff; border: 1px solid #828790; overflow: hidden; }
.root { height: 21px; flex: none; display: flex; align-items: center; gap: 4px; padding: 2px 0 0 5px; }
ul { list-style: none; margin: 0; padding: 0 0 0 8px; flex: 1; background: repeating-linear-gradient(#888 0 1px, transparent 1px 2px) 12px 0/1px 350px no-repeat; }
li { height: 20px; display: flex; align-items: center; white-space: nowrap; letter-spacing: .2px; background: repeating-linear-gradient(90deg, #999 0 1px, transparent 1px 2px) 9px 10px/6px 1px no-repeat; }
li.zh { letter-spacing: 0; }
li svg + svg { margin-left: 5px; }
li span { margin-left: 4px; width: 138px; overflow: hidden; }
.hscroll { height: 17px; flex: none; display: flex; align-items: center; background: #f2f2f2; }
.hscroll b { width: 19px; display: flex; justify-content: center; }
.thumb { height: 15px; display: flex; align-items: center; justify-content: center; border: 1px solid #86aa7b; border-radius: 2px; background: linear-gradient(#eef8ea 0 15%, #dff2d9 45%, #caebc0 55%, #d3efca); }
.thumb em { width: 9px; height: 7px; background: repeating-linear-gradient(90deg, #777 0 1px, #fff 1px 2px, transparent 2px 3px); }
.t1 { width: 135px; } .track { width: 10px; height: 17px; background: #e0f0db; }

.toctools { height: 26px; flex: none; display: flex; align-items: center; padding: 0 0 0 4px; }
.toctools .sel { width: 22px; height: 22px; display: flex; align-items: center; justify-content: center; border: 1px solid #3c96f2; background: #deebf9; }
.toctools > svg { margin-left: 4px; }
.toctools > .first { margin-left: 3px; }
.toctools .sep { margin-left: 3px; }
.layers { flex: 1; background: #fff; border: 1px solid #828790; padding-top: 1px; }
.row { height: 20px; display: flex; align-items: center; }
.l0 { padding-left: 8px; gap: 6px; }
.l0 strong { margin-left: -2px; }
.l1 { padding-left: 27px; gap: 8px; letter-spacing: .1px; }
.sym { margin: 0 1px 0 58px; background: #e9f0fa; gap: 3px; padding-left: 1px; line-height: 18px; }
.pt { margin-left: 60px; padding: 0; }
.sw { width: 15px; height: 11px; margin-top: 2px; border: 1px solid #6b6b6b; }
.c0 { background: #000; } .c1 { background: #6bf215; } .c2 { background: #e30ad8; } .c3 { background: #fb1616; } .c4 { background: #ecf9fa; }
.val { padding-left: 82px; }
.ramp { height: 80px; margin: 0 1px 0 58px; display: flex; gap: 5px; background: #e9f0fa; letter-spacing: .2px; }
.ramp i { width: 14px; height: 40px; background: linear-gradient(#f4f4f4, #000); }
.ramp div { display: flex; flex-direction: column; gap: 20px; line-height: 14px; }
.ramp span { height: 20px; }

.view { width: 948px; height: 577px; display: grid; grid-template: 561px 15px/1fr 14px; border-top: 1px solid #6c6f74; border-left: 1px solid #6c6f74; border-bottom: 1px solid #e2e2e2; }
.canvas { padding: 26px 0 0 134px; border-right: 1px solid #ddd; border-bottom: 1px solid #ddd; }
.vscroll { display: flex; flex-direction: column; align-items: center; background: #f2f2f2; }
.vscroll b { height: 18px; display: flex; align-items: center; }
.vthumb { width: 13px; height: 522px; display: flex; align-items: center; justify-content: center; border: 1px solid #7ca671; border-radius: 2px; background: linear-gradient(90deg, #eef8ea, #dff2d9 45%, #caebc0 55%, #d3efca); }
.vthumb em { width: 7px; height: 9px; background: repeating-linear-gradient(#777 0 1px, #fff 1px 2px, transparent 2px 3px); }
.viewfoot { grid-column: 1 / 3; display: flex; align-items: center; background: #f0f0f0; }
.viewfoot .thumb { height: 14px; margin-bottom: 1px; }
.vb { width: 16px; height: 14px; display: flex; align-items: center; justify-content: center; margin-left: 1px; }
.vb + .vb { margin-left: 0; }
.vb.on { border: 1px solid #777; border-radius: 3px; background: #e1e1e1; }
.viewfoot .sep { height: 13px; background-image: linear-gradient(#777,#777); }
.rf { margin-left: 6px; } .ps { margin-left: 9px; }
.viewfoot b { width: 20px; display: flex; justify-content: center; }
.viewfoot .ps + b { margin-left: 3px; }
.t2 { width: 818px; }
.side { width: 25px; padding: 2px 0 0 5px; }
.tab { width: 22px; height: 52px; border: 1px solid #90959c; border-radius: 4px; padding: 4px 0 0 1px; }
.tab span { display: block; width: 24px; height: 16px; margin: 5px 0 0 -4px; line-height: 16px; white-space: nowrap; color: #555; transform: rotate(90deg); }

.status { height: 23px; flex: none; display: flex; justify-content: flex-end; padding-right: 90px; line-height: 27px; color: #111; }

.taskbar { height: 40px; flex: none; display: flex; align-items: center; border-top: 2px solid #716938; gap: 4.400px;
  background: radial-gradient(ellipse 130px 40px at 670px 5px, #5b431a, transparent), radial-gradient(ellipse 120px 35px at 1010px 5px, #513b12, transparent), radial-gradient(ellipse 110px 30px at 1230px 0, #4f3811, transparent), linear-gradient(90deg, #191307, #120d05 12%, #2e1f0b 20%, #22170b 26%, #3b2917 33%, #453115 48%, #2d220d 60%, #382a0d 72%, #261b08 83%, #160f05 95%, #070502); }
.start { width: 52px; display: flex; justify-content: center; padding-left: 2px; }
.tk { width: 58px; height: 38px; flex: none; display: flex; align-items: center; justify-content: center; }
.act { border: 1px solid #a19a88; border-radius: 3px; background: linear-gradient(160deg, rgba(255,255,255,.45), rgba(255,255,255,.12) 50%, rgba(255,255,255,.25)); }
.word { width: 50px; margin-right: 7px; box-shadow: 3px 0 0 -1px #6b5c42, 4px 0 0 -1px #aaa18d, 7px 0 0 -1px #6b5c42, 8px 0 0 -1px #aaa18d; }
.hot { background: linear-gradient(160deg, rgba(255,255,255,.75), rgba(255,255,255,.35) 50%, rgba(255,255,255,.6)); border-color: #d6d2c8; }
.tray { margin-left: auto; display: flex; align-items: center; gap: 8px; color: #fff; }
.ch { font: 12px/14px "Liberation Mono", monospace; letter-spacing: -.8px; margin-top: -4px; }
.tray .usb { margin-left: 12px; } .tray .pill { margin-left: 6px; }
.tray > svg:nth-of-type(-n+3) { margin-top: -5px; }
.clock { width: 89px; padding-right: 17px; display: flex; flex-direction: column; align-items: center; line-height: 18px; font-size: 12px; letter-spacing: .1px; }
```
